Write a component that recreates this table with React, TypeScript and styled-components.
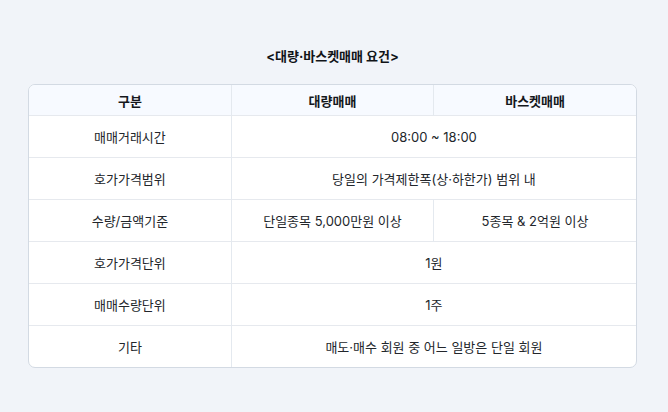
import React from "react";
import styled, { createGlobalStyle } from "styled-components";

const GlobalStyle = createGlobalStyle`
  html, body {
    margin: 0;
    padding: 0;
    background: #f1f4f9;
  }
  body {
    font-family: "Inter", "Noto Sans CJK KR", sans-serif;
    color: #1f2329;
  }
`

const Page = styled.div`
  width: 668px;
  height: 412px;
  box-sizing: border-box;
  padding: 46px 31px 0 28px;
`

const Title = styled.h3`
  margin: 0 0 18px;
  font-size: 13px;
  line-height: 20px;
  font-weight: 700;
  text-align: center;
  color: #111418;
`

const TableBox = styled.div`
  border: 1px solid #d3dae3;
  border-radius: 7px;
  overflow: hidden;
  background: #ffffff;
`

const Table = styled.table`
  width: 100%;
  border-collapse: collapse;
  table-layout: fixed;
  font-size: 13px;
`

const HeadCell = styled.th`
  height: 30px;
  padding: 0;
  background: #f7faff;
  font-weight: 700;
  color: #15181c;
  text-align: center;
  border-left: 1px solid #e4e9ef;

  &:first-child {
    border-left: 0;
  }
`

const Row = styled.tr`
  border-top: 1px solid #e6e9ee;
`

const Cell = styled.td`
  height: 41px;
  padding: 0;
  text-align: center;
  color: #22262b;
  border-left: 1px solid #e4e9ef;

  &:first-child {
    border-left: 0;
  }
`

type Req = {
  label: string
  values: string[]
}

const rows: Req[] = [
  { label: "매매거래시간", values: ["08:00 ~ 18:00"] },
  { label: "호가가격범위", values: ["당일의 가격제한폭(상·하한가) 범위 내"] },
  { label: "수량/금액기준", values: ["단일종목 5,000만원 이상", "5종목 & 2억원 이상"] },
  { label: "호가가격단위", values: ["1원"] },
  { label: "매매수량단위", values: ["1주"] },
  { label: "기타", values: ["매도·매수 회원 중 어느 일방은 단일 회원"] }
]

const App = () => {
  return (
    <Page>
      <GlobalStyle />
      <Title>&lt;대량·바스켓매매 요건&gt;</Title>
      <TableBox>
        <Table>
          <thead>
            <tr>
              <HeadCell>구분</HeadCell>
              <HeadCell>대량매매</HeadCell>
              <HeadCell>바스켓매매</HeadCell>
            </tr>
          </thead>
          <tbody>
            {rows.map((row) => (
              <Row key={row.label}>
                <Cell>{row.label}</Cell>
                {row.values.map((v) => (
                  <Cell key={v} colSpan={row.values.length === 1 ? 2 : 1}>
                    {v}
                  </Cell>
                ))}
              </Row>
            ))}
          </tbody>
        </Table>
      </TableBox>
    </Page>
  );
}

export default App
